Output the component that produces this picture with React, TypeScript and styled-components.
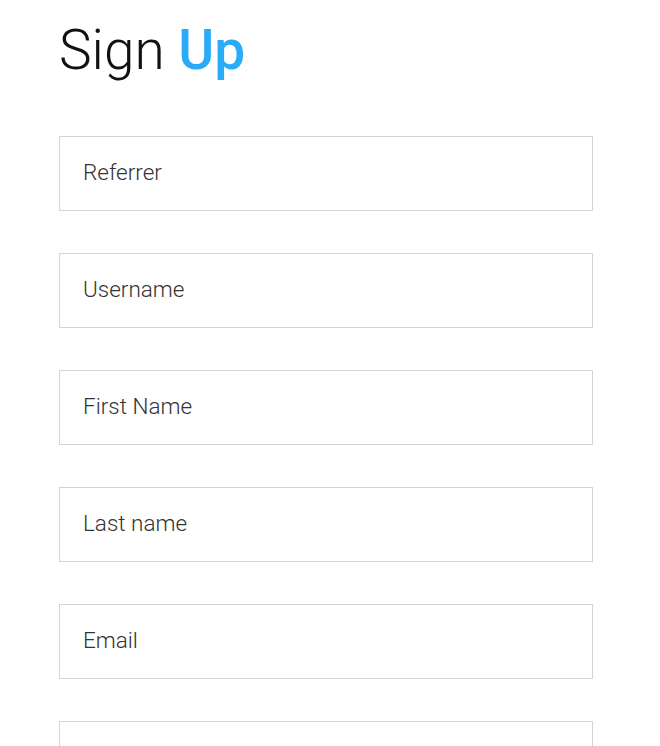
import styled, { createGlobalStyle } from "styled-components";

const GlobalStyle = createGlobalStyle`
  html, body {
    margin: 0;
    padding: 0;
    background: #fff;
  }
  * {
    box-sizing: border-box;
  }
`;

const fields = ["Referrer", "Username", "First Name", "Last name", "Email", "Password"];

const App = () => {
  return (
    <>
      <GlobalStyle />
      <Page>
        <Title>
          Sign <span className="accent">Up</span>
        </Title>
        <Form>
          {fields.map((name) => (
            <Field key={name} type="text" placeholder={name === "Password" ? "" : name} />
          ))}
        </Form>
      </Page>
    </>
  );
};

const Page = styled.div`
  width: 534px;
  margin-left: 59px;
  padding-top: 14px;
  font-family: Roboto, "Liberation Sans", sans-serif;
`;

const Title = styled.h1`
  margin: 0;
  font-size: 55px;
  font-weight: 300;
  line-height: 72px;
  color: #111;
  .accent {
    font-weight: 500;
    color: #2aabf8;
  }
`;

const Form = styled.form`
  display: flex;
  flex-direction: column;
  gap: 42px;
  margin-top: 50px;
`;

const Field = styled.input`
  width: 100%;
  height: 75px;
  padding: 0 23px 3px;
  border: 1px solid #d4d4d4;
  border-radius: 0;
  outline: none;
  background: #fff;
  font-family: Roboto, "Liberation Sans", sans-serif;
  font-size: 22.5px;
  font-weight: 300;
  color: #333;
  &::placeholder {
    color: #333;
    opacity: 1;
  }
`;

export default App;
